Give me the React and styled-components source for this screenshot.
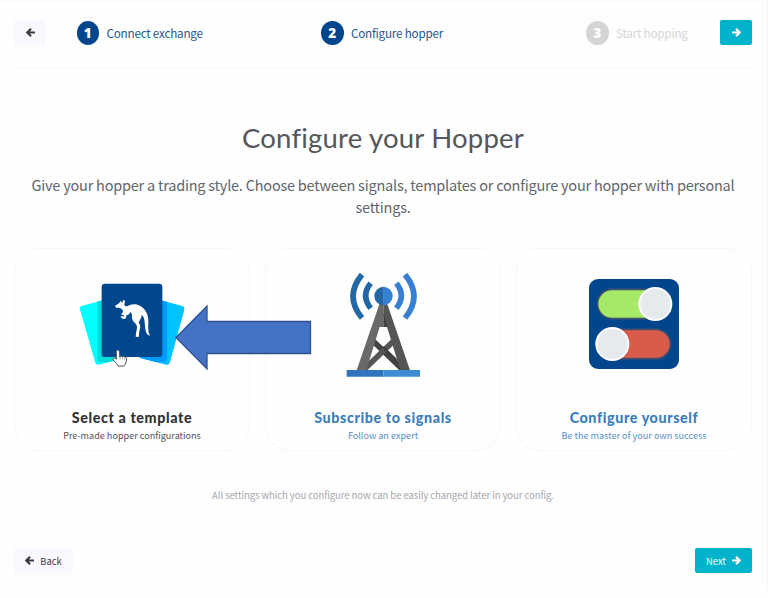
import React from 'react';
import styled, { createGlobalStyle } from 'styled-components';

const body = '"Noto Sans CJK SC", "Noto Sans", sans-serif';
const display = 'Lato, sans-serif';

const GlobalStyle = createGlobalStyle`
  * { box-sizing: border-box; }
  body { margin: 0; background: #fefefe; font-family: ${body}; }
`;

const Page = styled.main`
  width: 768px;
  height: 598px;
  padding: 20px 16px 0 14px;
  display: flex;
  flex-direction: column;
  border-top: 1px solid #f9f9fa;
  background: linear-gradient(#f5f4fb, #f5f4fb) right top / 1px 589px no-repeat #fefefe;
  overflow: hidden;
`;

const Header = styled.header`
  height: 49px;
  margin-top: -1px;
  display: flex;
  align-items: flex-start;
  border-bottom: 1px solid #f6f6f6;
`;

const Button = styled.button`
  width: ${p => p.$width}px;
  height: 25px;
  padding: 0;
  border: 0;
  border-radius: 2px;
  display: flex;
  align-items: center;
  justify-content: center;
  gap: 6px;
  background: ${p => (p.$primary ? '#00b3ca' : '#f9f8fe')};
  color: ${p => (p.$primary ? '#fff' : '#3b3d42')};
  font: 400 9.4px/14px ${body};
`;

const Steps = styled.nav`
  flex: 1;
  height: 25px;
  display: grid;
  grid-template-columns: 244.5px 265px 1fr;
  padding-left: 30.5px;
`;

const Step = styled.div`
  display: flex;
  align-items: center;
  gap: 7.5px;
  color: ${p => (p.$muted ? '#d6d6d6' : '#265791')};
  font-size: 11.7px;
  line-height: 24px;
  white-space: nowrap;
  letter-spacing: -0.22px;
`;

const StepNumber = styled.span`
  width: 22.5px;
  height: 24px;
  border-radius: 50%;
  background: ${p => (p.$muted ? '#d5d5d5' : '#00468c')};
  color: #fff;
  font: 800 13.5px/24px "Open Sans", sans-serif;
  letter-spacing: 0;
  text-align: center;
`;

const Title = styled.h1`
  margin: 50px 0 0;
  height: 40px;
  text-align: center;
  font: 400 27.5px/38px ${display};
  letter-spacing: 0.2px;
  color: #54575b;
`;

const Intro = styled.p`
  margin: 15px 0 0;
  height: 44px;
  text-align: center;
  font-size: 14.5px;
  letter-spacing: -0.22px;
  line-height: 22px;
  color: #5e666f;
`;

const Options = styled.section`
  position: relative;
  margin-top: 30px;
  width: 738px;
  display: grid;
  grid-template-columns: repeat(3, 1fr);
  gap: 15px;
`;

const Card = styled.article`
  height: 203px;
  border: 1px solid #f7f7f7;
  border-radius: 25px;
  display: flex;
  flex-direction: column;
  align-items: center;
  color: ${p => (p.$active ? '#323337' : '#397dbb')};
`;

const Art = styled.div`
  height: 159px;
  padding-top: ${p => p.$top}px;
  margin-left: ${p => p.$shift || 0}px;
  svg { display: block; }
`;

const CardTitle = styled.h2`
  margin: 0;
  font: 900 14.3px/20px ${display};
  letter-spacing: 0.6px;
`;

const CardText = styled.p`
  margin: 0;
  font-size: 9.1px;
  line-height: 15px;
  opacity: 0.85;
`;

const Pointer = styled.svg`
  position: absolute;
  left: 160px;
  top: 55px;
`;

const Note = styled.p`
  margin: 36px 0 0;
  height: 16px;
  text-align: center;
  font-size: 9.5px;
  letter-spacing: -0.06px;
  line-height: 16px;
  color: #a3a8af;
`;

const Footer = styled.footer`
  margin-top: 45px;
  display: flex;
  justify-content: space-between;
`;

const Arrow = ({ back }) => (
  <svg width="9" height="9" viewBox="0 0 18 18" fill="none" stroke="currentColor" strokeWidth="4.4">
    <path d={back ? 'M10 1.500L2.800 9l7.200 7.500M3 9h15' : 'M8 1.500l7.200 7.500-7.200 7.500M15 9H0'} />
  </svg>
);

const TemplateArt = () => (
  <svg width="130" height="110" viewBox="0 0 390 330">
    <defs>
      <clipPath id="leftSheet"><path d="M35 108L100 90l50 178-64 16q-8 2-10-6L30 118q-2-8 5-10Z" /></clipPath>
      <clipPath id="rightSheet"><path d="M270 90l67 18q8 2 6 11l-43 158q-2 9-11 7L208 263Z" /></clipPath>
    </defs>
    <g clipPath="url(#leftSheet)">
      <path fill="#00ffff" d="M0 50h180v260H0z" />
      <rect x="82" y="40" width="200" height="236" rx="12" fill="#00dcdc" />
    </g>
    <g clipPath="url(#rightSheet)">
      <path fill="#00c4ff" d="M180 50h200v260H180z" />
      <rect x="180" y="40" width="111" height="237" rx="12" fill="#009bff" />
    </g>
    <rect x="95" y="41" width="182" height="220" rx="10" fill="#00478d" />
    <path
      transform="translate(114 72)"
      fill="#fff"
      d="M21 36L34 27 37 21 44 26 45 18 51 20 49 32C52 38 57 38 64 34C73 30 86 29 97 36C112 44 121 61 121 82C121 99 119 109 126 125C115 124 112 110 111 96C110 80 109 69 101 63C101 73 94 79 92 86C96 90 98 95 96 103C93 112 94 120 92 129L83 128C84 120 84 115 86 108C88 100 88 94 81 87C72 80 71 72 72 62L68 53C63 62 58 65 54 63C57 69 53 76 46 75C42 73 38 71 38 67L43 66 46 69 49 65 39 61C42 57 47 56 44 49C41 42 35 41 25 41Z"
    />
    <path fill="#fff" stroke="#55565a" strokeWidth="3" strokeLinejoin="round" d="M139 242q5-5 9 1l1 17q4-3 8 0 5-2 7 1 5-1 6 4 0 12-5 19l-3 4h-18q-4-8-13-17-5-6 0-7 5-1 8 4Z" />
    <path stroke="#77777a" strokeWidth="2" d="M150 260v8m7-7v8m7-7v7" />
  </svg>
);

const TowerArt = () => (
  <svg width="130" height="125" viewBox="0 0 390 375">
    <g fill="none" strokeWidth="17">
      <path stroke="#2368a5" d="M126 44q-54 65 0 130M152 70q-30 37 0 75" />
      <path stroke="#377fd3" d="M255 44q54 65 0 130M229 70q30 37 0 75" />
    </g>
    <path stroke="#414141" strokeWidth="17" fill="none" d="M156 240l91 88" />
    <path stroke="#555" strokeWidth="17" fill="none" d="M224 240l-91 88" />
    <path fill="#414141" d="M190 257l10 10 29 28 10 20-49-47Z" />
    <path fill="#696969" d="M179 130h11v35l-51 166h-29Z" />
    <path fill="#555" d="M190 130h11l69 201h-29l-51-166Z" />
    <path fill="#696969" d="M169 164h21v37h-31Z" />
    <path fill="#414141" d="M190 160l14 41h-14Z" />
    <path fill="#2368a5" d="M191 80v56a28 28 0 0 1 0-56Z" />
    <path fill="#377fd3" d="M190 80a28 28 0 0 1 0 56Z" />
    <path fill="#2f74bd" d="M80 330h110v20H80Z" />
    <path fill="#3e8dd0" d="M190 330h110v20H190Z" />
  </svg>
);

const TogglesArt = () => (
  <svg width="90" height="90" viewBox="0 0 270 270">
    <rect width="270" height="270" rx="27" fill="#00468c" />
    <rect x="24" y="28" width="218" height="93" rx="46" fill="#42506f" stroke="#284b79" strokeWidth="4" />
    <rect x="28" y="34" width="210" height="82" rx="41" fill="#a6e867" />
    <rect x="24" y="149" width="222" height="93" rx="46" fill="#42506f" stroke="#284b79" strokeWidth="4" />
    <rect x="32" y="154" width="210" height="82" rx="41" fill="#d95b4a" />
    <circle cx="199" cy="75" r="48" fill="#e5eaed" stroke="#fff" strokeWidth="6" />
    <circle cx="70" cy="195" r="48" fill="#e5eaed" stroke="#fff" strokeWidth="6" />
  </svg>
);

export default function App() {
  return (
    <>
      <GlobalStyle />
      <Page>
        <Header>
          <Button $width={32} aria-label="Back"><Arrow back /></Button>
          <Steps>
            <Step><StepNumber>1</StepNumber>Connect exchange</Step>
            <Step><StepNumber>2</StepNumber>Configure hopper</Step>
            <Step $muted><StepNumber $muted>3</StepNumber>Start hopping</Step>
          </Steps>
          <Button $width={32} $primary aria-label="Next"><Arrow /></Button>
        </Header>
        <Title>Configure your Hopper</Title>
        <Intro>Give your hopper a trading style. Choose between signals, templates or configure your hopper with personal settings.</Intro>
        <Options>
          <Card $active>
            <Art $top={21} $shift={6}><TemplateArt /></Art>
            <CardTitle>Select a template</CardTitle>
            <CardText>Pre-made hopper configurations</CardText>
          </Card>
          <Card>
            <Art $top={11} $shift={4}><TowerArt /></Art>
            <CardTitle>Subscribe to signals</CardTitle>
            <CardText>Follow an expert</CardText>
          </Card>
          <Card>
            <Art $top={30}><TogglesArt /></Art>
            <CardTitle>Configure yourself</CardTitle>
            <CardText>Be the master of your own success</CardText>
          </Card>
          <Pointer width="140" height="70" viewBox="0 0 140 70">
            <path fill="#4472c4" stroke="#30528f" strokeWidth="1.3" d="M2 34.5L33 3v15.500h103.500v32H33V66Z" />
          </Pointer>
        </Options>
        <Note>All settings which you configure now can be easily changed later in your config.</Note>
        <Footer>
          <Button $width={59}><Arrow back />Back</Button>
          <Button $width={57} $primary>Next<Arrow /></Button>
        </Footer>
      </Page>
    </>
  );
}
